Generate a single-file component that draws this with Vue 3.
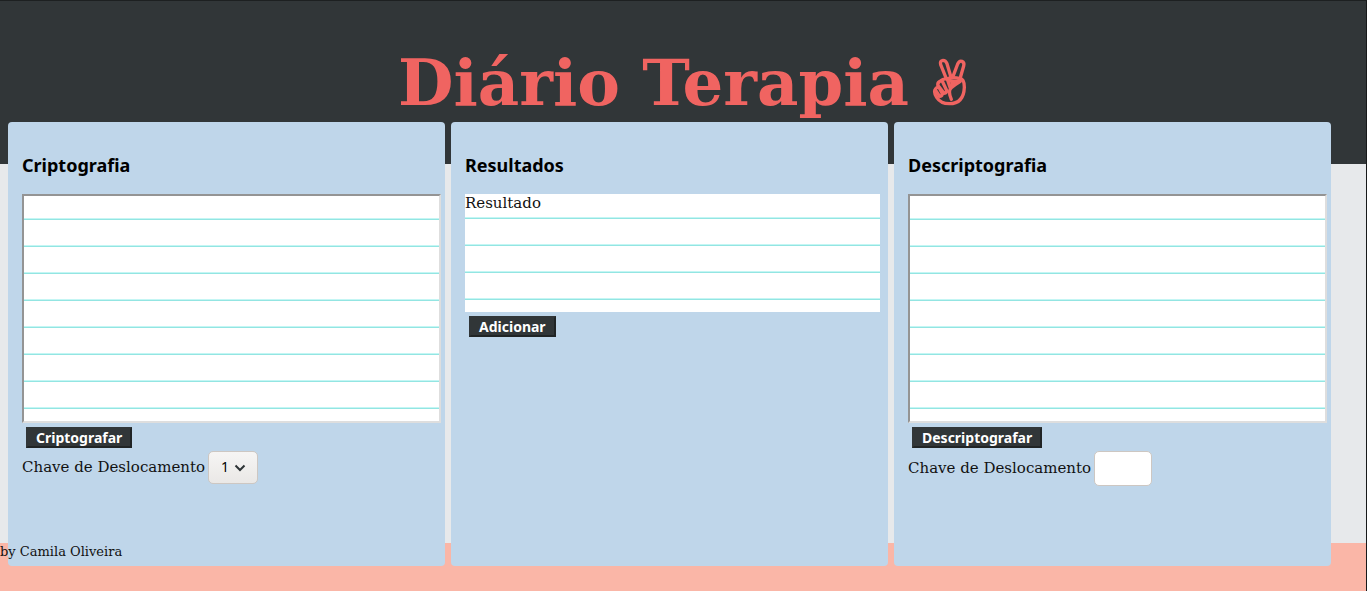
<script setup>
import { ref } from 'vue'

const plain = ref('')
const cipher = ref('')
const encryptKey = ref(1)
const decryptKey = ref('')
const keys = Array.from({ length: 25 }, (_, i) => i + 1)
</script>

<template>
  <div class="page">
    <header class="header">
      <h1>
        Diário Terapia
        <svg class="peace" viewBox="0 4 108 150" role="img" aria-label="Paz">
          <path d="M43 66 L26 24 Q23 12 33 11 Q41 11 45 21 L57 62" />
          <path d="M62 62 L77 22 Q82 11 90 14 Q98 17 95 28 L84 66" />
          <path d="M44 67 Q62 60 84 66 Q97 67 97 92 Q95 141 52 141 Q26 141 14 122 Q5 108 9 100 Q11 93 19 91 Q14 78 25 73 Q34 65 44 67 Z" />
          <path d="M10 100 L23 119 Q32 120 30 109 L20 90 M21 90 L36 110 Q46 110 43 99 L31 74" />
          <path d="M46 68 L54 92 M48 69 Q60 78 85 74 Q72 82 59 92 Q46 101 58 128" />
          <path d="M60 79 L67 79 L59 86 Z" />
        </svg>
      </h1>
    </header>

    <main class="cards">
      <section class="card">
        <h2><label for="plain">Criptografia</label></h2>
        <textarea id="plain" v-model="plain" class="sheet"></textarea>
        <button type="button">Criptografar</button>
        <div class="key">
          <label for="encrypt-key">Chave de Deslocamento</label>
          <span class="select">
            <select id="encrypt-key" v-model="encryptKey">
              <option v-for="k in keys" :key="k" :value="k">{{ k }}</option>
            </select>
            <svg viewBox="0 0 12 8" aria-hidden="true"><path d="M1.500 1.500 L6 6 L10.500 1.500" /></svg>
          </span>
        </div>
      </section>

      <section class="card">
        <h2>Resultados</h2>
        <div class="result">Resultado</div>
        <button type="button">Adicionar</button>
      </section>

      <section class="card">
        <h2><label for="cipher">Descriptografia</label></h2>
        <textarea id="cipher" v-model="cipher" class="sheet"></textarea>
        <button type="button">Descriptografar</button>
        <div class="key">
          <label for="decrypt-key">Chave de Deslocamento</label>
          <input id="decrypt-key" v-model="decryptKey" type="text" inputmode="numeric">
        </div>
      </section>
    </main>

    <footer class="footer"><span>by Camila Oliveira</span></footer>
  </div>
</template>

<style>
body {
  margin: 0;
}
</style>

<style scoped>
.page {
  box-sizing: border-box;
  min-height: 100vh;
  display: flex;
  flex-direction: column;
  background: #e7e9eb;
  border-top: 1px solid #1d2021;
  border-right: 1px solid #17191a;
  font-family: "DejaVu Serif", serif;
  font-size: 15px;
  color: #111;
}

.header {
  background: #313638;
  padding: 42px 0 41px;
}

h1 {
  display: flex;
  justify-content: center;
  align-items: center;
  gap: 23px;
  margin: 0;
  font-size: 64px;
  line-height: 80px;
  color: #f06461;
}

.peace {
  width: 36px;
  height: 50px;
  fill: none;
  stroke: currentColor;
  stroke-width: 10;
  stroke-linecap: round;
  stroke-linejoin: round;
}

.cards {
  flex: 1;
  display: grid;
  grid-template-columns: repeat(3, 1fr);
  gap: 6px;
  margin: -42px 35px -23px 8px;
  z-index: 1;
}

.card {
  background: #bfd6ea;
  border-radius: 4px;
  padding: 31px 4px 80px 14px;
}

h2 {
  margin: 0 0 17px;
  font: bold 18px/24px "Noto Sans", sans-serif;
  color: #000;
}

.sheet,
.result {
  display: block;
  box-sizing: border-box;
  background: repeating-linear-gradient(#fff 0 25px, #c4f6f4 25px 26px, #93e5e2 26px 27px);
  background-position: 0 -3px;
  background-size: 100% 270px;
  font: 15px/18px "DejaVu Serif", serif;
}

.sheet {
  width: 100%;
  height: 229px;
  border: 2px solid;
  border-color: #949494 #dedede #dedede #949494;
  margin: 0;
  padding: 2px;
  resize: none;
  outline: none;
}

.result {
  height: 118px;
  margin-right: 4px;
  background-position: 0 -2px;
}

button {
  display: block;
  margin: 4px;
  margin-bottom: 3px;
  padding: 0 8px;
  border: 2px solid;
  border-color: #313638 #202425 #202425 #313638;
  background: #313638;
  color: #fff;
  font: bold 14px/17px "Noto Sans", sans-serif;
}

.key {
  display: flex;
  align-items: center;
  gap: 3px;
}

.key label {
  padding-bottom: 2px;
}

.select {
  display: grid;
  align-items: center;
}

.select select,
.select svg {
  grid-area: 1 / 1;
}

select,
input {
  box-sizing: border-box;
  border: 1px solid #cdc7c2;
  border-radius: 5px;
  font: 14px/20px "Noto Sans", sans-serif;
  color: #000;
}

select {
  appearance: none;
  width: 50px;
  height: 33px;
  padding: 0 12px 2px;
  background: linear-gradient(#f6f5f4, #eae8e6);
}

.select svg {
  justify-self: end;
  width: 12px;
  height: 8px;
  margin-right: 12px;
  fill: none;
  stroke: #2e3436;
  stroke-width: 2;
  pointer-events: none;
}

input {
  width: 58px;
  height: 35px;
  padding: 0 8px;
  background: #fff;
}

.footer {
  height: 48px;
  background: #fab6a7;
  font-size: 13px;
  line-height: 18px;
}

/* The credit stays readable where the cards overlap the footer. */
.footer span {
  position: relative;
  z-index: 2;
}
</style>
